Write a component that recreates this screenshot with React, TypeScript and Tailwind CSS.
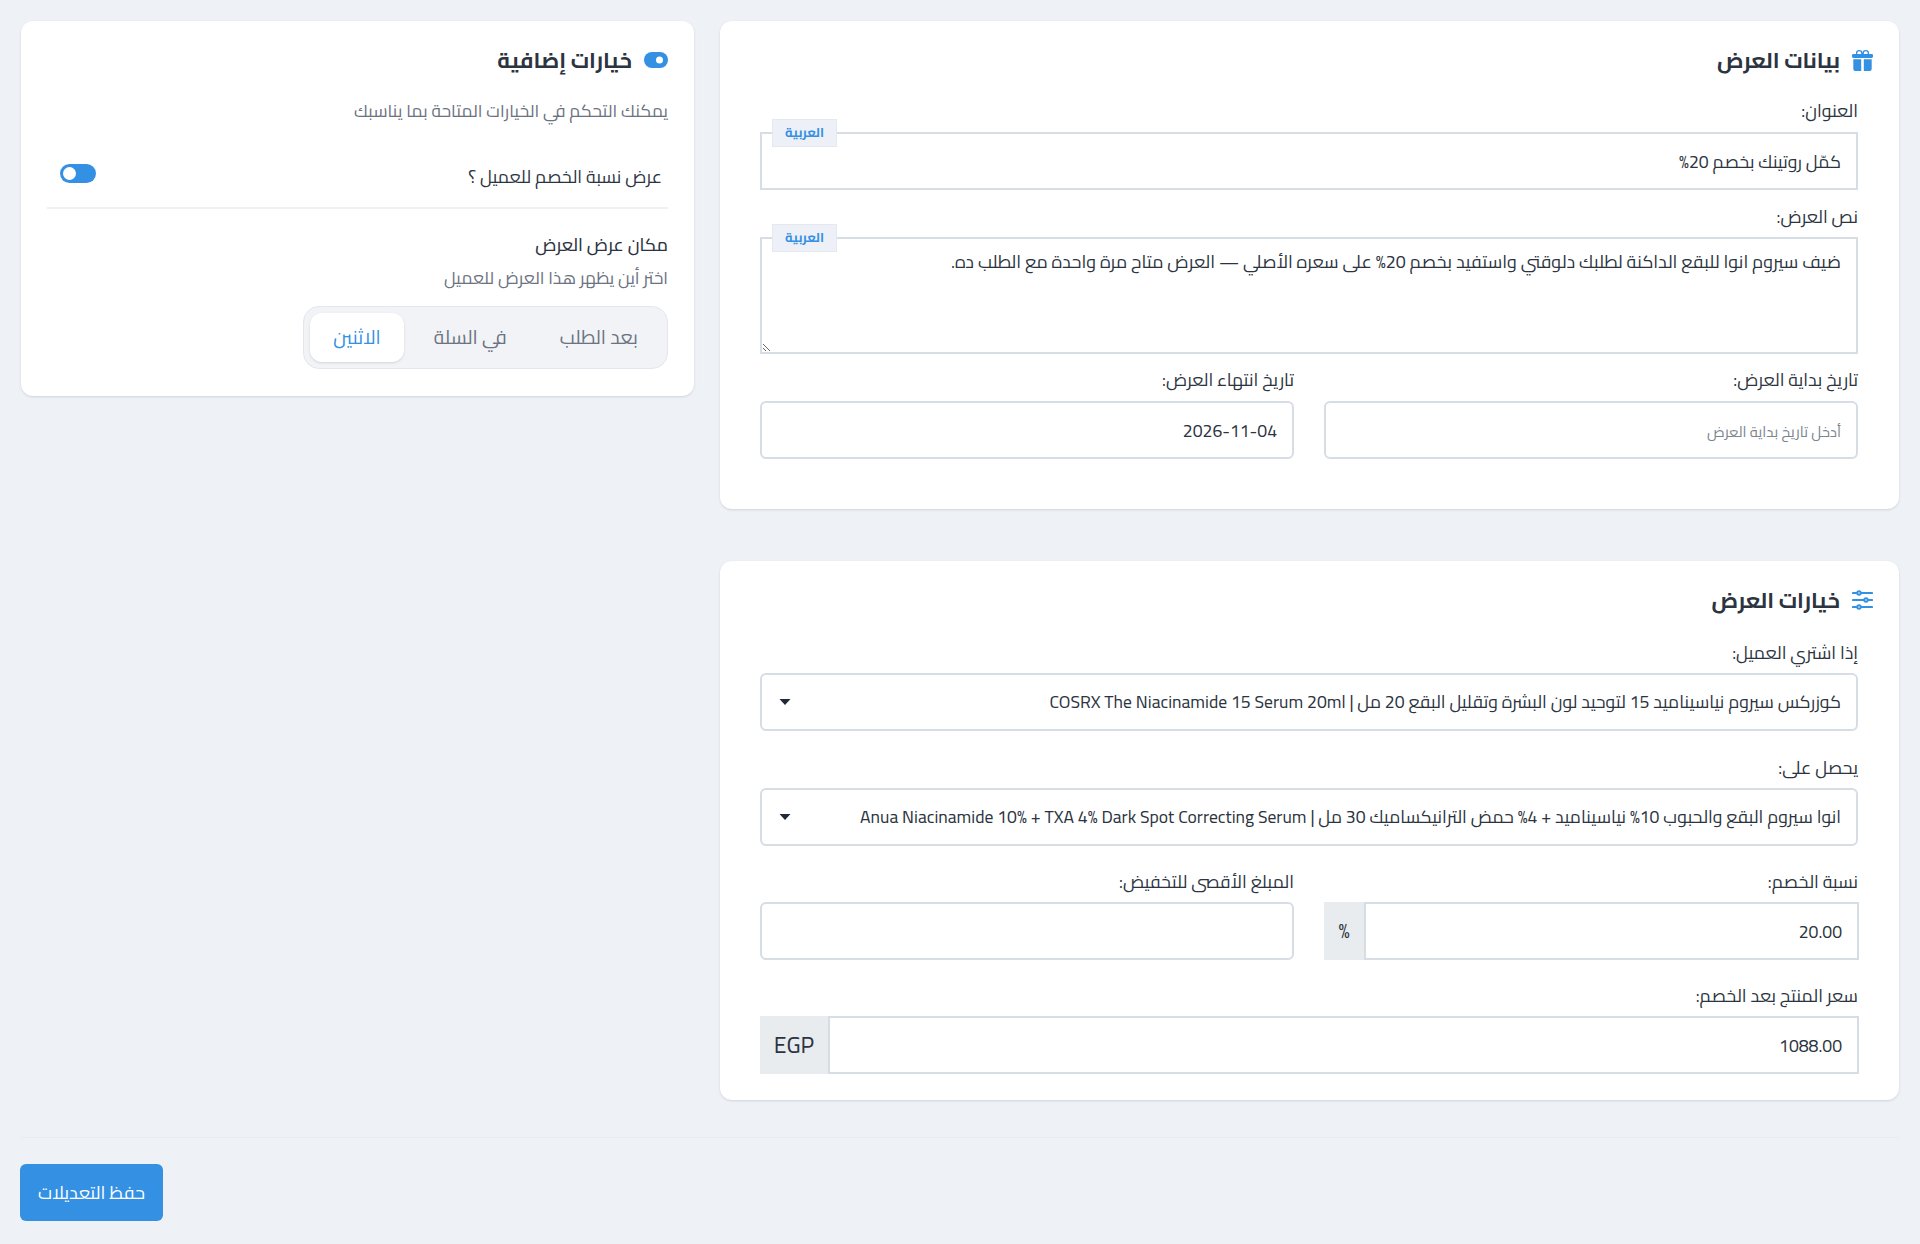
import { BsGiftFill } from "react-icons/bs";

const labelClass = "block h-6 leading-6 text-[17.7px] text-[#2b3440]";
const inputBase =
  "w-full px-[15px] bg-white border-2 border-[#d7dde4] text-[#2b3440] outline-none placeholder:text-[#7b8490] placeholder:text-[14.8px]";
const inputClass = inputBase + " h-[58px] rounded-[6px] text-[17.6px]";
const squareInputClass = inputBase + " h-[58px] text-[17.6px]";

function LangBadge() {
  return (
    <span className="absolute left-3 -top-[13px] w-[65px] h-[28px] flex items-center justify-center bg-[#edf1f7] border border-[#e4e9f0] text-[13px] font-bold text-[#3490e2]">
      العربية
    </span>
  );
}

function Caret() {
  return (
    <svg
      className="absolute left-[19px] top-1/2 -translate-y-1/2 pointer-events-none"
      width="12"
      height="7"
      viewBox="0 0 12 7"
    >
      <path d="M0.5 0.5h11L6 6.5z" fill="#1f2937" />
    </svg>
  );
}

function ProductSelect({ value }: { value: string }) {
  return (
    <div className="relative">
      <select className={inputClass + " appearance-none"} defaultValue={value}>
        <option>{value}</option>
      </select>
      <Caret />
    </div>
  );
}

function CardHeader({ icon, title }: { icon: React.ReactNode; title: string }) {
  return (
    <div className="flex items-center gap-3 h-8">
      <span className="text-[#3490e2] flex items-center">{icon}</span>
      <h2 className="text-[21.8px] font-bold text-[#2b3440]">{title}</h2>
    </div>
  );
}

function ToggleIcon() {
  return (
    <svg width="24" height="16" viewBox="0 0 24 16">
      <rect width="24" height="16" rx="8" fill="currentColor" />
      <circle cx="15.5" cy="8" r="3.5" fill="#fff" />
    </svg>
  );
}

function SlidersIcon() {
  return (
    <svg
      width="21"
      height="20"
      viewBox="3 3.5 18 17"
      fill="none"
      stroke="currentColor"
      strokeWidth="1.6"
      strokeLinecap="round"
    >
      <path d="M10.5 6h9.75M10.5 6a1.5 1.5 0 1 1-3 0m3 0a1.5 1.5 0 1 0-3 0M3.75 6H7.5m3 12h9.75m-9.75 0a1.5 1.5 0 0 1-3 0m3 0a1.5 1.5 0 0 0-3 0m-3.75 0H7.5m9-6h3.75m-3.75 0a1.5 1.5 0 0 1-3 0m3 0a1.5 1.5 0 0 0-3 0m-9.75 0h9.75" />
    </svg>
  );
}

export default function App() {
  return (
    <div
      dir="rtl"
      className="min-h-[1244px] bg-[#eef2f6] px-[21px] pt-[21px] font-['Cairo','Noto_Sans_Arabic','Noto_Sans','DejaVu_Sans',sans-serif]"
    >
      <div className="grid grid-cols-[1179px_673px] gap-[26px] items-start">
        <div className="flex flex-col gap-[52px]">
          <section className="bg-white rounded-xl shadow-sm px-[26px] pt-[23px] pb-[50px]">
            <CardHeader icon={<BsGiftFill size={21} />} title="بيانات العرض" />
            <div className="pr-[15px] pl-[14px] mt-[23px]">
              <label className={labelClass + " mb-[9px]"}>العنوان:</label>
              <div className="relative">
                <LangBadge />
                <input className={squareInputClass} defaultValue="كمّل روتينك بخصم 20%" />
              </div>
              <label className={labelClass + " mt-[15px] mb-2"}>نص العرض:</label>
              <div className="relative">
                <LangBadge />
                <textarea
                  className={inputBase + " h-[117px] block py-[10px] resize-y text-[17.85px]"}
                  defaultValue="ضيف سيروم انوا للبقع الداكنة لطلبك دلوقتي واستفيد بخصم 20% على سعره الأصلي — العرض متاح مرة واحدة مع الطلب ده."
                />
              </div>
              <div className="grid grid-cols-2 gap-[30px] mt-[14px]">
                <div>
                  <label className={labelClass + " mb-[9px]"}>تاريخ بداية العرض:</label>
                  <input className={inputClass} placeholder="أدخل تاريخ بداية العرض" />
                </div>
                <div>
                  <label className={labelClass + " mb-[9px]"}>تاريخ انتهاء العرض:</label>
                  <input className={inputClass} defaultValue="2026-11-04" />
                </div>
              </div>
            </div>
          </section>

          <section className="bg-white rounded-xl shadow-sm px-[26px] pt-[23px] pb-[26px]">
            <CardHeader icon={<SlidersIcon />} title="خيارات العرض" />
            <div className="pr-[15px] pl-[14px] mt-[25px]">
              <label className={labelClass + " mb-2"}>إذا اشتري العميل:</label>
              <ProductSelect value="كوزركس سيروم نياسيناميد 15 لتوحيد لون البشرة وتقليل البقع 20 مل | COSRX The Niacinamide 15 Serum 20ml" />
              <label className={labelClass + " mt-[25px] mb-2"}>يحصل على:</label>
              <ProductSelect value="انوا سيروم البقع والحبوب 10% نياسيناميد + 4% حمض الترانيكساميك 30 مل | Anua Niacinamide 10% + TXA 4% Dark Spot Correcting Serum" />
              <div className="grid grid-cols-2 gap-[30px] mt-6">
                <div>
                  <label className={labelClass + " mb-2"}>نسبة الخصم:</label>
                  <div className="flex -mr-px">
                    <input className={squareInputClass + " flex-1 min-w-0"} defaultValue="20.00" />
                    <span className="w-10 shrink-0 flex items-center justify-center bg-[#e9ecef] text-[20px] text-[#2b3440]">
                      %
                    </span>
                  </div>
                </div>
                <div>
                  <label className={labelClass + " mb-2"}>المبلغ الأقصى للتخفيض:</label>
                  <input className={inputClass} />
                </div>
              </div>
              <label className={labelClass + " mt-6 mb-2"}>سعر المنتج بعد الخصم:</label>
              <div className="flex -mr-px">
                <input className={squareInputClass + " flex-1 min-w-0"} defaultValue="1088.00" />
                <span className="w-[68px] shrink-0 flex items-center justify-center bg-[#e9ecef] text-[23px] text-[#2b3440]">
                  EGP
                </span>
              </div>
            </div>
          </section>
        </div>

        <section className="bg-white rounded-xl shadow-sm px-[26px] pt-[23px] pb-[27px]">
          <CardHeader icon={<ToggleIcon />} title="خيارات إضافية" />
          <p className="mt-[23px] h-6 leading-6 text-[17.35px] text-[#6b7280]">
            يمكنك التحكم في الخيارات المتاحة بما يناسبك
          </p>
          <div className="flex items-center justify-between h-[86px] pt-[26px] pb-[2px] pr-[6px] pl-[13px] border-b-2 border-[#eef1f4]">
            <span className="text-[17.7px] text-[#2b3440]">عرض نسبة الخصم للعميل ؟</span>
            <span className="w-[36px] h-[19px] rounded-full bg-[#3490e2] flex items-center justify-end px-[3px] mb-2">
              <span className="w-[13px] h-[13px] rounded-full bg-white" />
            </span>
          </div>
          <h3 className="mt-6 h-6 leading-6 text-[17.7px] font-medium text-[#2b3440]">مكان عرض العرض</h3>
          <p className="mt-[9px] h-6 leading-6 text-[17.4px] text-[#6b7280]">اختر أين يظهر هذا العرض للعميل</p>
          <div className="mt-4 w-[365px] h-[63px] flex items-center gap-1 p-[6px] bg-[#f1f3f7] border border-[#e3e7ed] rounded-2xl">
            <button className="flex-1 h-[49px] text-[19.2px] text-[#6b7280]">بعد الطلب</button>
            <button className="flex-1 h-[49px] text-[19.2px] text-[#6b7280]">في السلة</button>
            <button className="w-[94px] h-[49px] bg-white rounded-xl shadow text-[19.2px] text-[#3490e2]">الاثنين</button>
          </div>
        </section>
      </div>

      <div className="mt-[37px] border-t border-[#e8ecf0] pt-[26px]">
        <button className="block mr-auto w-[143px] h-[57px] -ml-px bg-[#3490e2] rounded-md text-[18px] text-white">
          حفظ التعديلات
        </button>
      </div>
    </div>
  );
}
